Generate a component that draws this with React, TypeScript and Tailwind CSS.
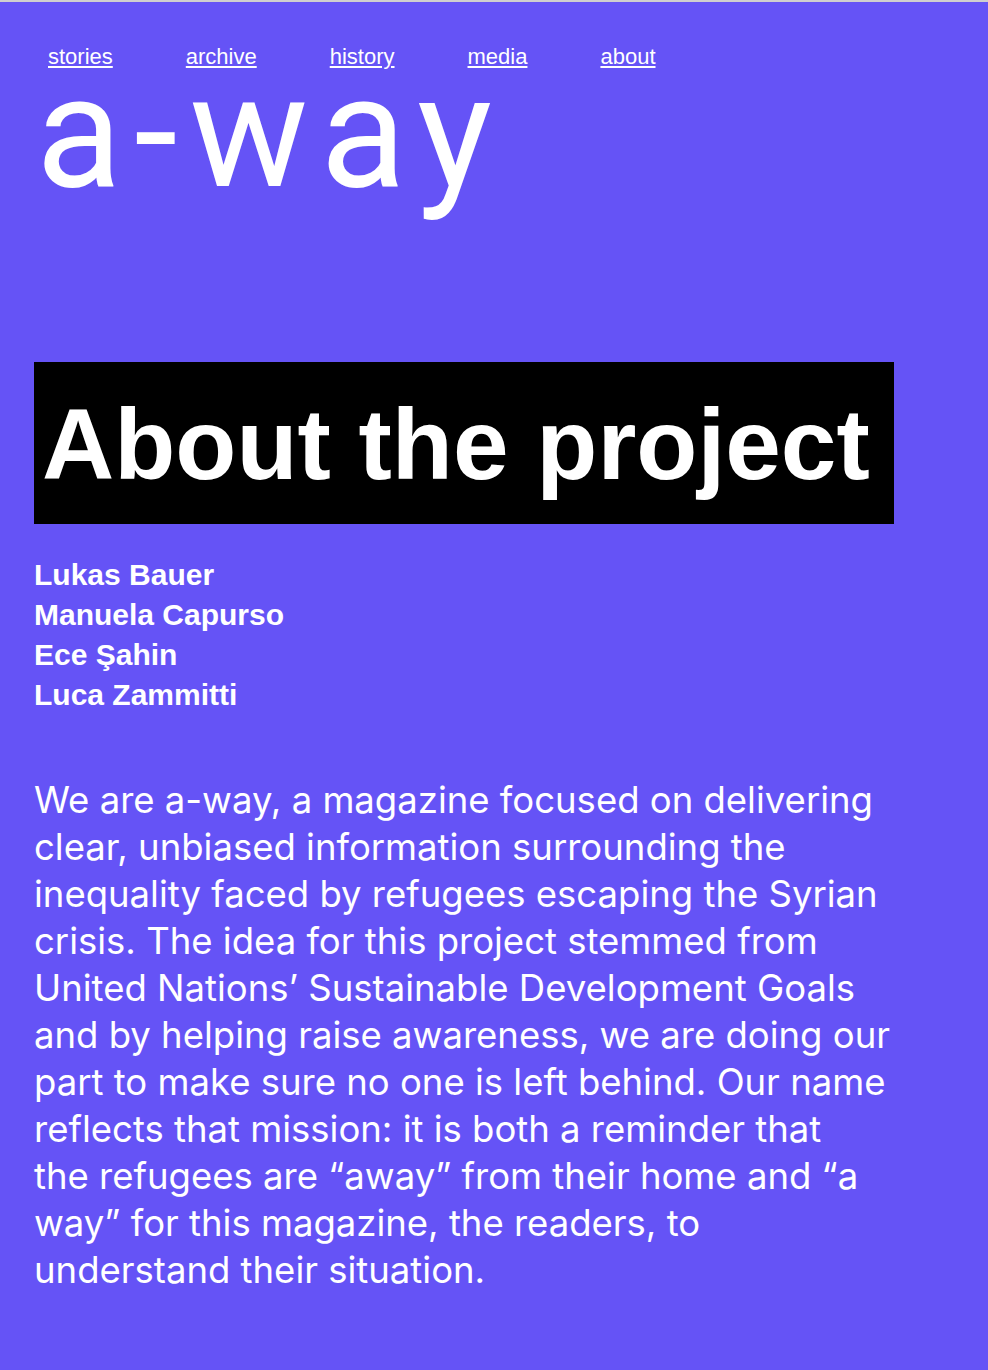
const navLinks = ["stories", "archive", "history", "media", "about"];

const team = ["Lukas Bauer", "Manuela Capurso", "Ece Şahin", "Luca Zammitti"];

// line breaks follow the original layout
const aboutLines = [
    "We are a-way, a magazine focused on delivering",
    "clear, unbiased information surrounding the",
    "inequality faced by refugees escaping the Syrian",
    "crisis. The idea for this project stemmed from",
    "United Nations’ Sustainable Development Goals",
    "and by helping raise awareness, we are doing our",
    "part to make sure no one is left behind. Our name",
    "reflects that mission: it is both a reminder that",
    "the refugees are “away” from their home and “a",
    "way” for this magazine, the readers, to",
    "understand their situation.",
];

export default function App() {
    return (
        <div className="min-h-[1370px] bg-[#6553f6] text-white border-t-2 border-[#cfcfcf]">
            <div className="pl-[34px]">
                {/* top nav */}
                <nav className="flex gap-[73px] pl-[14px] pt-[42px] font-['Liberation_Sans',Arial,sans-serif] text-[22px] leading-[25px]">
                    {navLinks.map((link) => (
                        <a key={link} href="#" className="underline underline-offset-[2px]">
                            {link}
                        </a>
                    ))}
                </nav>

                {/* logo */}
                <div className="mt-[4px] pl-[2px] font-['Roboto',sans-serif] font-normal text-[158px] leading-[118px] tracking-[12px]">
                    a-way
                </div>

                {/* heading */}
                <h1 className="mt-[171px] w-[860px] h-[162px] bg-black pl-[8px] font-['Liberation_Sans',Arial,sans-serif] font-bold text-[100px] leading-[164px]">
                    About the project
                </h1>

                {/* team */}
                <div className="mt-[31px] font-['Liberation_Sans',Arial,sans-serif] font-bold text-[30px] leading-[40px]">
                    {team.map((name) => (
                        <div key={name}>{name}</div>
                    ))}
                </div>

                {/* about text */}
                <p className="mt-[62px] font-['Inter',sans-serif] text-[36.5px] leading-[47px] whitespace-nowrap">
                    {aboutLines.map((line) => (
                        <span key={line} className="block">{line}</span>
                    ))}
                </p>
            </div>
        </div>
    );
}
